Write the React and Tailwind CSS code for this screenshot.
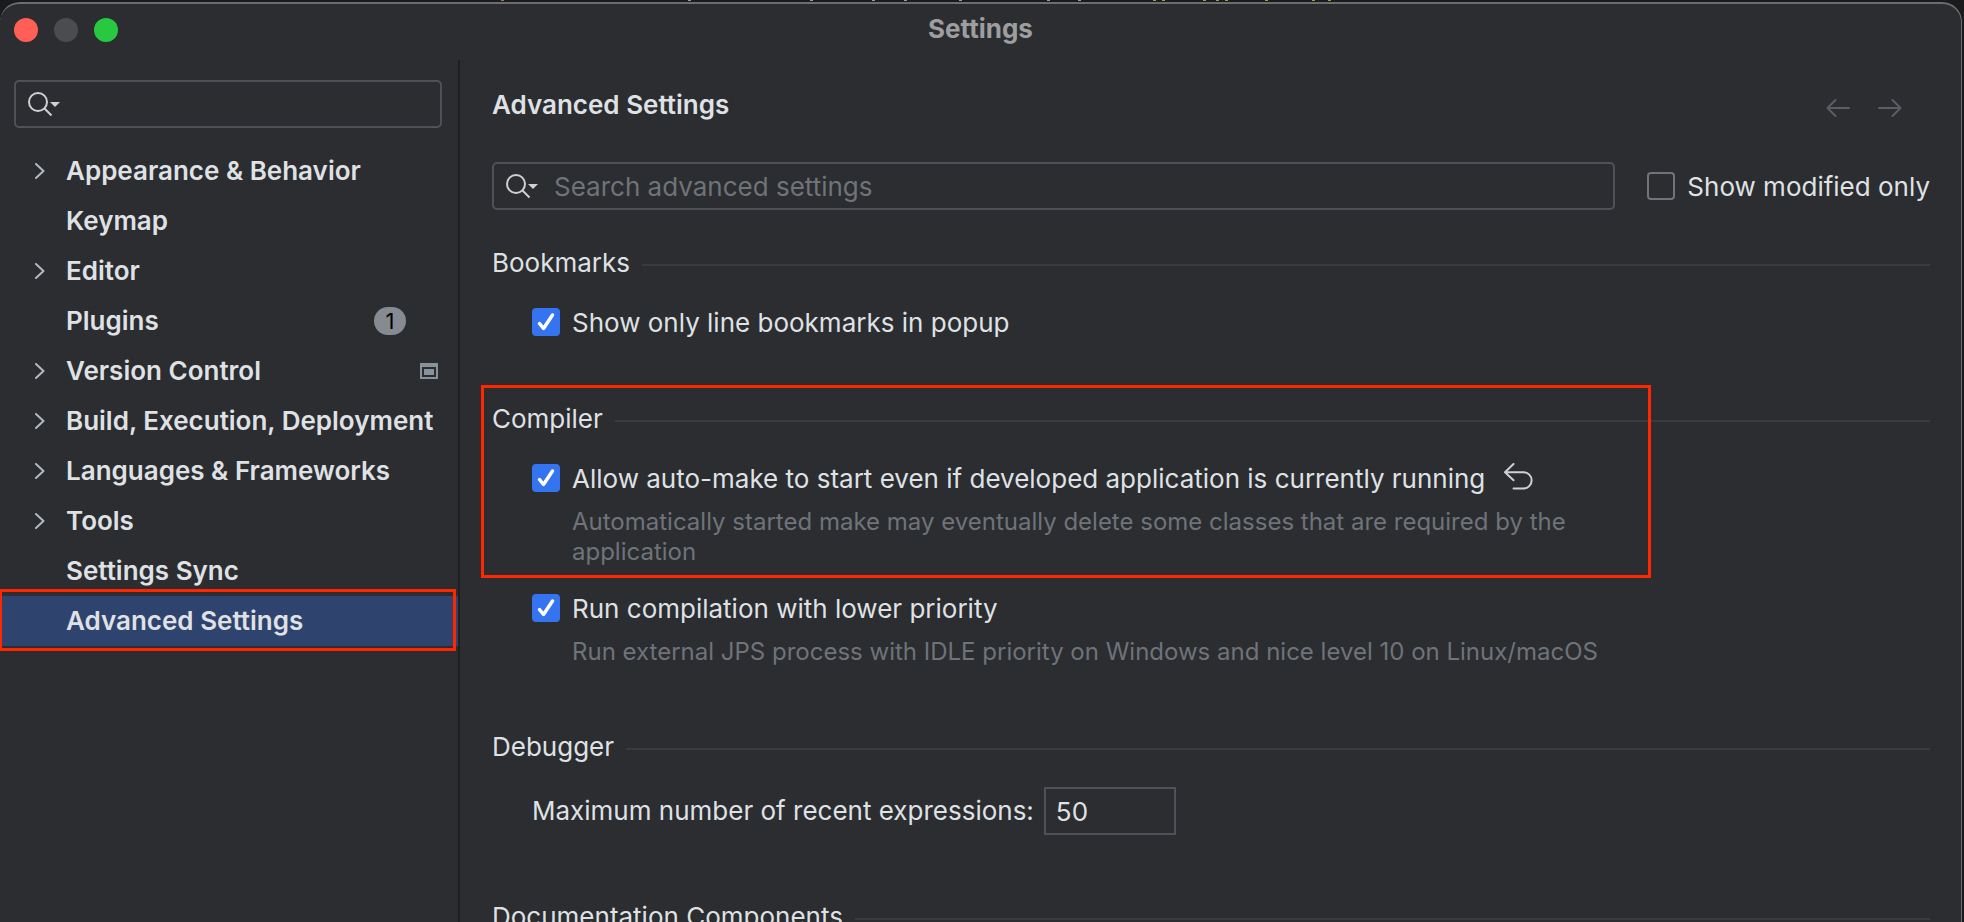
import { useState } from "react";

const NAV = [
  { label: "Appearance & Behavior", expandable: true },
  { label: "Keymap" },
  { label: "Editor", expandable: true },
  { label: "Plugins", badge: "1" },
  { label: "Version Control", expandable: true, project: true },
  { label: "Build, Execution, Deployment", expandable: true },
  { label: "Languages & Frameworks", expandable: true },
  { label: "Tools", expandable: true },
  { label: "Settings Sync" },
  { label: "Advanced Settings", selected: true },
];

function SearchIcon() {
  return (
    <svg width="32" height="26" viewBox="0 0 32 26" fill="none" className="shrink-0" aria-hidden="true">
      <circle cx="10" cy="11" r="9" stroke="#ced0d6" strokeWidth="2" />
      <path d="M16.5 17.5 23.5 24.5" stroke="#ced0d6" strokeWidth="2" />
      <path d="M22 11h10l-5 5z" fill="#ced0d6" />
    </svg>
  );
}

function Chevron() {
  return (
    <svg width="10" height="16" viewBox="0 0 10 16" fill="none" aria-hidden="true">
      <path d="M1 1l7.5 7L1 15" stroke="#b4b8bf" strokeWidth="2" strokeLinecap="round" strokeLinejoin="round" />
    </svg>
  );
}

// Sliver of the editor that stays visible above the dialog.
function EditorEdge() {
  return (
    <svg width="1964" height="2" viewBox="0 0 1964 2" className="block shrink-0" aria-hidden="true">
      <path d="M501 0.5h3" stroke="#b0714a" />
      <path
        d="M688 0.5h3M810 0.5h3M872 0.5h3M904 0.5h3M959 0.5h3M1047 0.5h3M1078 0.5h3"
        stroke="#9a9da3"
      />
      <path
        d="M1153 0.5h3M1162 0.5h3M1203 0.5h3M1216 0.5h3M1225 0.5h3M1265 0.5h3M1312 0.5h3M1328 0.5h3"
        stroke="#a39a48"
      />
    </svg>
  );
}

function NavItem({ item }) {
  return (
    <li className="relative">
      <a
        href="#"
        aria-current={item.selected ? "page" : undefined}
        className={
          item.selected
            ? "flex h-[50px] items-center bg-[#2e436e] pr-4 font-semibold"
            : "flex h-[50px] items-center pr-4 font-semibold"
        }
      >
        <span className="flex w-[66px] shrink-0 pl-[35px]">{item.expandable && <Chevron />}</span>
        <span className="whitespace-nowrap">{item.label}</span>
        {item.badge && (
          <span className="mr-9 ml-auto flex h-7 w-8 items-center justify-center rounded-full bg-[#868a91] text-[22px] font-normal text-black">
            {item.badge}
          </span>
        )}
        {item.project && (
          <svg width="18" height="16" viewBox="0 0 18 16" className="mr-1 ml-auto" aria-hidden="true">
            <path d="M0 0h18v16H0zM2 4v10h14V4z" fill="#87939a" fillRule="evenodd" />
            <path d="M4 6h10v6H4z" fill="#87939a" />
          </svg>
        )}
      </a>
      {item.selected && (
        <span className="pointer-events-none absolute -top-[7px] right-[2px] -bottom-[5px] -left-px border-3 border-[#ff2600]" />
      )}
    </li>
  );
}

function Check({ label, defaultChecked = false }) {
  const [checked, setChecked] = useState(defaultChecked);
  return (
    <label className="flex h-8 items-center gap-3 whitespace-nowrap">
      <span className="grid shrink-0">
        <input
          type="checkbox"
          checked={checked}
          onChange={(e) => setChecked(e.target.checked)}
          className="col-start-1 row-start-1 size-7 appearance-none rounded-[4px] border-2 border-[#6f737a] checked:border-[#3574f0] checked:bg-[#3574f0]"
        />
        {checked && (
          <svg
            viewBox="0 0 28 28"
            fill="none"
            className="pointer-events-none col-start-1 row-start-1 size-7"
            aria-hidden="true"
          >
            <path d="M7.5 15.5 11.5 20.5 20.5 7" stroke="#fff" strokeWidth="3.5" strokeLinecap="round" strokeLinejoin="round" />
          </svg>
        )}
      </span>
      <span className="pt-0.5">{label}</span>
    </label>
  );
}

function Section({ title, children }) {
  return (
    <section>
      <div className="flex h-8 items-center gap-3">
        <h2>{title}</h2>
        <span className="mt-1 h-0.5 flex-1 bg-[#393b40]" />
      </div>
      {children}
    </section>
  );
}

function Hint({ children }) {
  return <p className="mt-[13px] max-w-[1100px] pl-10 text-[24px] leading-[30px] text-[#6f737a]">{children}</p>;
}

export default function App() {
  return (
    <div className="flex h-screen flex-col overflow-hidden bg-[#1a1b1d] font-['Inter',sans-serif] text-[26px] leading-8 text-[#dfe1e5]">
      <EditorEdge />
      <div className="mr-0.5 flex min-h-0 flex-1 flex-col rounded-t-[20px] border-t-2 border-r border-[#6c6d6f] bg-[#2b2d30]">
        <header className="grid h-14 shrink-0 grid-cols-[1fr_auto_1fr] items-center pb-1">
          <div className="flex gap-4 pl-3.5">
            <button type="button" aria-label="Close" className="size-6 rounded-full bg-[#ff5f57]" />
            <button type="button" aria-label="Minimize" className="size-6 rounded-full bg-[#4b4c4f]" />
            <button type="button" aria-label="Zoom" className="size-6 rounded-full bg-[#28c840]" />
          </div>
          <h1 className="pb-0.5 font-bold text-[#9d9ea0]">Settings</h1>
        </header>

        <div className="flex min-h-0 flex-1">
          <nav className="w-[460px] shrink-0 border-r-2 border-[#1e1f22] pt-5">
            <div className="mr-4 ml-3.5 flex h-12 items-center rounded-[5px] border-2 border-[#4e5157] pl-3">
              <SearchIcon />
              <input type="text" aria-label="Search settings" className="min-w-0 flex-1 bg-transparent outline-none" />
            </div>
            <ul className="mt-[18px]">
              {NAV.map((item) => (
                <NavItem key={item.label} item={item} />
              ))}
            </ul>
          </nav>

          <main className="min-w-0 flex-1 overflow-hidden pt-[29px] pr-[31px] pl-8">
            <div className="flex h-8 items-center justify-between">
              <h2 className="font-semibold">Advanced Settings</h2>
              <div className="flex gap-7 pt-1.5 pr-7">
                <button type="button" aria-label="Back">
                  <svg width="24" height="18" viewBox="0 0 24 18" fill="none" stroke="#5a5d63" strokeWidth="2" strokeLinecap="round" strokeLinejoin="round">
                    <path d="M9.5 1 1.5 9l8 8M1.5 9H23" />
                  </svg>
                </button>
                <button type="button" aria-label="Forward">
                  <svg width="24" height="18" viewBox="0 0 24 18" fill="none" stroke="#5a5d63" strokeWidth="2" strokeLinecap="round" strokeLinejoin="round">
                    <path d="M14.5 1l8 8-8 8M22.5 9H1" />
                  </svg>
                </button>
              </div>
            </div>

            <div className="mt-[41px] flex items-center gap-8">
              <div className="flex h-12 flex-1 items-center gap-4 rounded-[5px] border-2 border-[#4e5157] pl-3">
                <SearchIcon />
                <input
                  type="text"
                  aria-label="Search advanced settings"
                  placeholder="Search advanced settings"
                  className="min-w-0 flex-1 bg-transparent pt-0.5 outline-none placeholder:text-[#6f737a]"
                />
              </div>
              <Check label="Show modified only" />
            </div>

            <div className="mt-[37px]">
              <Section title="Bookmarks">
                <div className="pt-[27px] pl-10">
                  <Check label="Show only line bookmarks in popup" defaultChecked />
                </div>
              </Section>
            </div>

            <div className="relative mt-[65px]">
              <Section title="Compiler">
                <div className="pt-[27px] pl-10">
                  <div className="flex h-8 items-center gap-[18px]">
                    <Check label="Allow auto-make to start even if developed application is currently running" defaultChecked />
                    <button type="button" aria-label="Reset to default">
                      <svg width="30" height="30" viewBox="0 0 30 30" fill="none" stroke="#ced0d6" strokeWidth="2" strokeLinecap="round" strokeLinejoin="round" className="block">
                        <path d="M10.5 1 2 9.2l8.500 8M2 9.2h18.500a8 8 0 0 1 0 16.300H10.500" />
                      </svg>
                    </button>
                  </div>
                  <Hint>Automatically started make may eventually delete some classes that are required by the application</Hint>
                </div>
              </Section>
              <span className="pointer-events-none absolute -top-[18px] -bottom-[11px] -left-[11px] w-[1170px] border-3 border-[#ff2600]" />
            </div>

            <div className="mt-[25px] pl-10">
              <Check label="Run compilation with lower priority" defaultChecked />
              <Hint>Run external JPS process with IDLE priority on Windows and nice level 10 on Linux/macOS</Hint>
            </div>

            <div className="mt-16">
              <Section title="Debugger">
                <div className="flex items-center gap-2.5 pt-6 pl-10">
                  <label htmlFor="recent-expressions">Maximum number of recent expressions:</label>
                  <input
                    id="recent-expressions"
                    type="text"
                    defaultValue="50"
                    className="h-12 w-[132px] border-2 border-[#4e5157] bg-transparent px-2.5 outline-none"
                  />
                </div>
              </Section>
            </div>

            <div className="mt-[66px]">
              <Section title="Documentation Components" />
            </div>
          </main>
        </div>
      </div>
    </div>
  );
}
